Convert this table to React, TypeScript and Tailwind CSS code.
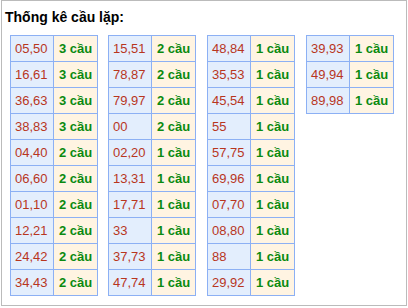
import React from "react";

type Row = [string, number];

const tables: Row[][] = [
  [
    ["05,50", 3],
    ["16,61", 3],
    ["36,63", 3],
    ["38,83", 3],
    ["04,40", 2],
    ["06,60", 2],
    ["01,10", 2],
    ["12,21", 2],
    ["24,42", 2],
    ["34,43", 2],
  ],
  [
    ["15,51", 2],
    ["78,87", 2],
    ["79,97", 2],
    ["00", 2],
    ["02,20", 1],
    ["13,31", 1],
    ["17,71", 1],
    ["33", 1],
    ["37,73", 1],
    ["47,74", 1],
  ],
  [
    ["48,84", 1],
    ["35,53", 1],
    ["45,54", 1],
    ["55", 1],
    ["57,75", 1],
    ["69,96", 1],
    ["07,70", 1],
    ["08,80", 1],
    ["88", 1],
    ["29,92", 1],
  ],
  [
    ["39,93", 1],
    ["49,94", 1],
    ["89,98", 1],
  ],
];

const margins = ["ml-0", "ml-[10px]", "ml-[11px]", "ml-[11px]"];

export default function App() {
  return (
    <div
      className="w-[408px] h-[308px] bg-white"
      style={{ fontFamily: '"Liberation Sans", Arial, sans-serif' }}
    >
      <div className="ml-[1px] w-[406px] h-[306px] border border-[#bbbbbb] pt-[8px] pl-[3px]">
        <div className="text-[14px] leading-[16px] font-bold text-black">
          Thống kê cầu lặp:
        </div>
        <div className="flex items-start mt-[10px] pl-[5px]">
          {tables.map((rows, ti) => (
            <div
              key={ti}
              className={`${margins[ti]} w-[88px] border-l border-t border-[#8cb0f4]`}
            >
              {rows.map(([num, n], ri) => (
                <div key={ri} className="flex h-[26px]">
                  <div className="w-[43px] h-[26px] border-r border-b border-[#8cb0f4] bg-[#e3eefd] text-[#b8361e] text-[13px] leading-[25px] pl-[4px]">
                    {num}
                  </div>
                  <div className="w-[44px] h-[26px] border-r border-b border-[#8cb0f4] bg-[#fff4e2] text-[#0b8a10] font-bold text-[13px] leading-[25px] pl-[5px]">
                    {n} cầu
                  </div>
                </div>
              ))}
            </div>
          ))}
        </div>
      </div>
    </div>
  );
}
